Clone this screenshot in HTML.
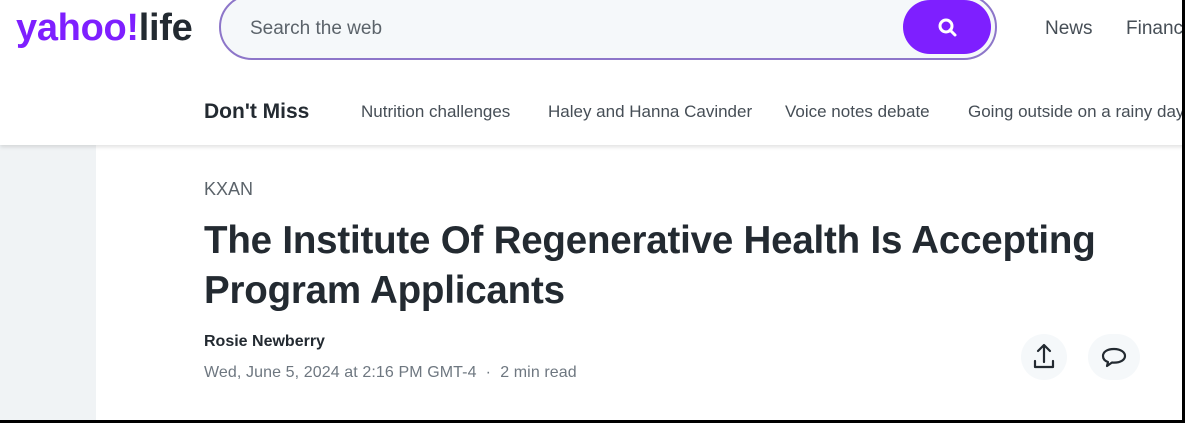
<!DOCTYPE html>
<html><head><meta charset="utf-8"><style>
*{margin:0;padding:0;box-sizing:border-box}
body{width:1185px;height:423px;overflow:hidden;background:#fff;font-family:"Liberation Sans",sans-serif;position:relative}
.header{position:absolute;left:0;top:0;width:1185px;height:145px;background:#fff;box-shadow:0 2px 4px rgba(0,0,0,.12);z-index:2;overflow:hidden}
.logo{position:absolute;left:16px;top:7px;font-size:38px;font-weight:700;letter-spacing:-0.3px;color:#7e1fff;white-space:nowrap}
.logo span{color:#232a31}
.search{position:absolute;left:219px;top:-6px;width:778px;height:66px;border:2px solid #8d76c9;border-radius:33px;background:#f5f8fa}
.search .ph{position:absolute;left:29px;top:22px;font-size:19px;color:#5b636a}
.search .btn{position:absolute;right:4px;top:4px;width:88px;height:54px;border-radius:27px;background:#7e1fff}
.nav{position:absolute;top:18px;font-size:19px;color:#464e56;white-space:nowrap}
.dm{position:absolute;left:204px;top:100px;font-size:21px;font-weight:700;color:#232a31}
.sub{position:absolute;top:102px;font-size:17px;color:#464e56;white-space:nowrap}
.side{position:absolute;left:0;top:145px;width:96px;height:278px;background:#f0f3f5}
.src{position:absolute;left:204px;top:179px;font-size:18px;color:#5b636a}
h1{position:absolute;left:204px;top:216px;font-size:38.5px;line-height:50px;font-weight:700;color:#232a31;letter-spacing:-0.2px;white-space:nowrap}
.auth{position:absolute;left:204px;top:333px;font-size:16px;font-weight:700;color:#232a31}
.date{position:absolute;left:204px;top:364px;font-size:16px;color:#6e7780;letter-spacing:0.1px;white-space:nowrap}
.ic{position:absolute;top:334px;width:46px;height:46px;border-radius:23px;background:#f5f8fa}
.br{position:absolute;background:#000;z-index:5}
</style></head><body>
<div class="header">
<div class="logo">yahoo!<span>life</span></div>
<div class="search"><div class="ph">Search the web</div>
<div class="btn"><svg width="88" height="54" viewBox="0 0 88 54"><circle cx="43" cy="26" r="6" fill="none" stroke="#fff" stroke-width="3"/><path d="M47 30l5 5" stroke="#fff" stroke-width="3" stroke-linecap="round"/></svg></div></div>
<div class="nav" style="left:1045px">News</div>
<div class="nav" style="left:1126px">Finance</div>
<div class="dm">Don't Miss</div>
<div class="sub" style="left:361px">Nutrition challenges</div>
<div class="sub" style="left:548px">Haley and Hanna Cavinder</div>
<div class="sub" style="left:785px">Voice notes debate</div>
<div class="sub" style="left:968px">Going outside on a rainy day</div>
</div>
<div class="side"></div>
<div class="src">KXAN</div>
<h1>The Institute Of Regenerative Health Is Accepting<br>Program Applicants</h1>
<div class="auth">Rosie Newberry</div>
<div class="date">Wed, June 5, 2024 at 2:16 PM GMT-4 &nbsp;·&nbsp; 2 min read</div>
<div class="ic" style="left:1021px"><svg width="46" height="46" viewBox="0 0 46 46" fill="none" stroke="#232a31" stroke-width="2.2" stroke-linecap="round" stroke-linejoin="round"><path d="M23 12v16M17 17l6-6 6 6M14 27v6h18v-6"/></svg></div>
<div class="ic" style="left:1088px;width:52px"><svg width="52" height="46" viewBox="0 0 52 46" fill="none" stroke="#232a31" stroke-width="2.2" stroke-linejoin="round"><path d="M26 15c-7 0-11 3-11 7 0 3 2 5 5 6l-1 4 5-3.5c1 .1 1.5.1 2 .1 7 0 11-3 11-6.6S33 15 26 15z"/></svg></div>
<div class="br" style="left:1182px;top:0;width:3px;height:423px"></div>
<div class="br" style="left:0;top:420px;width:1185px;height:3px"></div>
</body></html>
